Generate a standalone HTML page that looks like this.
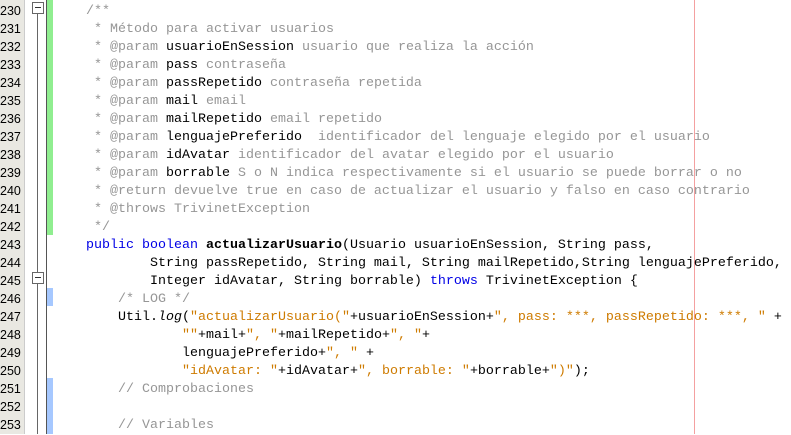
<!DOCTYPE html><html><head><meta charset="utf-8"><style>
body{margin:0;width:791px;height:434px;overflow:hidden;background:#fff;position:relative;font-family:"Liberation Mono",monospace;font-size:13.33px}
.gut{position:absolute;left:0;top:0;width:24px;height:434px;background:#e9e8e2;border-right:1px solid #ccc}
.ln{position:absolute;left:0;width:24px;text-align:left;color:#000;font-family:"Liberation Sans",sans-serif;font-size:12.5px;line-height:18px}
.code{position:absolute;left:86px;top:3px;margin:0;font:inherit;font-size:13.33px;white-space:pre;line-height:18px}
.c{color:#969696}.k{color:#0000e6}.s{color:#ce7b00}.b{font-weight:bold}.i{font-style:italic}
.box{position:absolute;left:32px;width:10px;height:10px;border:1px solid #666;background:#fff}
.box:after{content:"";position:absolute;left:2px;top:4px;width:6px;height:1px;background:#333}
</style></head><body>
<div class="gut"></div>
<div style="position:absolute;left:46px;top:0;width:1px;height:434px;background:#555"></div>
<div style="position:absolute;left:37px;top:12px;width:1px;height:422px;background:#666"></div>
<div style="position:absolute;left:47px;top:0;width:6px;height:235px;background:#90ee90"></div>
<div style="position:absolute;left:47px;top:288px;width:6px;height:18px;background:#a6c8ff"></div>
<div style="position:absolute;left:47px;top:378px;width:6px;height:56px;background:#a6c8ff"></div>
<div class="box" style="top:2px"></div>
<div class="box" style="top:272px"></div>
<div style="position:absolute;left:694px;top:0;width:1px;height:434px;background:#f4a0a0"></div>
<div id="nums"></div>
<pre class="code"><span class="c">/**
 * Método para activar usuarios
 * @param <span style="color:#000">usuarioEnSession</span> usuario que realiza la acción
 * @param <span style="color:#000">pass</span> contraseña
 * @param <span style="color:#000">passRepetido</span> contraseña repetida
 * @param <span style="color:#000">mail</span> email
 * @param <span style="color:#000">mailRepetido</span> email repetido
 * @param <span style="color:#000">lenguajePreferido</span>  identificador del lenguaje elegido por el usuario
 * @param <span style="color:#000">idAvatar</span> identificador del avatar elegido por el usuario
 * @param <span style="color:#000">borrable</span> S o N indica respectivamente si el usuario se puede borrar o no
 * @return devuelve true en caso de actualizar el usuario y falso en caso contrario
 * @throws TrivinetException
 */</span>
<span class="k">public</span> <span class="k">boolean</span> <span class="b">actualizarUsuario</span>(Usuario usuarioEnSession, String pass,
        String passRepetido, String mail, String mailRepetido,String lenguajePreferido,
        Integer idAvatar, String borrable) <span class="k">throws</span> TrivinetException {
    <span class="c">/* LOG */</span>
    Util.<span class="i">log</span>(<span class="s">"actualizarUsuario("</span>+usuarioEnSession+<span class="s">", pass: ***, passRepetido: ***, "</span> +
            <span class="s">""</span>+mail+<span class="s">", "</span>+mailRepetido+<span class="s">", "</span>+
            lenguajePreferido+<span class="s">", "</span> +
            <span class="s">"idAvatar: "</span>+idAvatar+<span class="s">", borrable: "</span>+borrable+<span class="s">")"</span>);
    <span class="c">// Comprobaciones</span>

    <span class="c">// Variables</span></pre>
<script>
var h='';for(var i=0;i<24;i++)h+='<div class="ln" style="top:'+(2+18*i)+'px">'+(230+i)+'</div>';
document.getElementById('nums').innerHTML=h;
</script>
</body></html>
